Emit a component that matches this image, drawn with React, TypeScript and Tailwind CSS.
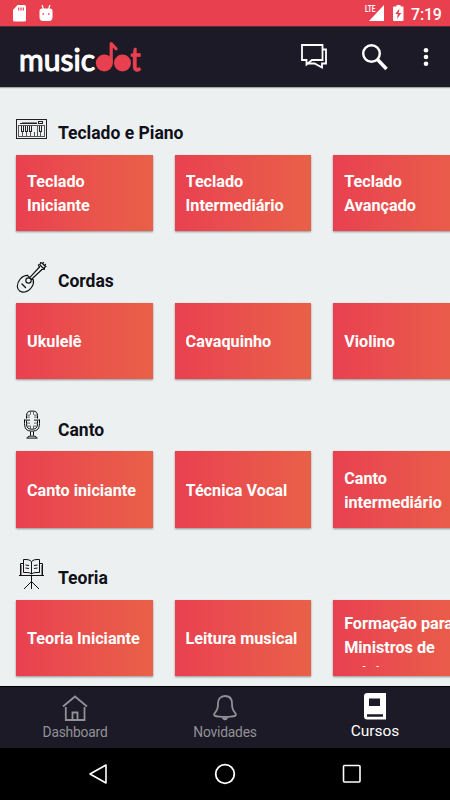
import React from "react";

type Section = { title: string; icon: React.ReactNode; courses: string[] };

function KeyboardIcon() {
  return (
    <svg width="32" height="32" viewBox="0 0 32 32" fill="none" stroke="#222" strokeWidth="1" shapeRendering="crispEdges">
      <rect x="0.5" y="6.5" width="30" height="19" />
      <rect x="2.5" y="12.5" width="26" height="11" stroke="#555" />
      <path d="M4 10.5H21" />
      <path d="M6 9.5H21" stroke="#888" />
      <path d="M22.5 8.5H26.5V10.5H22.5Z" />
      <path d="M6.500 19V23M10.500 19V23M14.500 19V23M18.500 19V23M21.500 13V23M24.500 19V23" stroke="#555" />
      <path d="M5.5 13V18.500H7.5V13M9.5 13V18.500H11.5V13M13.5 13V18.500H15.5V13M23.5 13V18.500H25.5V13" />
    </svg>
  );
}

function LuteIcon() {
  return (
    <svg width="32" height="32" viewBox="0 0 32 32" fill="none" stroke="#111" strokeWidth="1.150" strokeLinecap="round" strokeLinejoin="round">
      <path d="M11.500 14.300C6 14.300 1.300 20 1.300 25.500C1.500 29.500 5 31.500 8.800 31C14 30 18.500 24 17.300 18.800" />
      <circle cx="12.500" cy="19.500" r="2.700" />
      <path d="M11.500 14.300L13.500 16.500M15.500 18.500L17.300 18.800" />
      <path d="M13.500 16.800L23.500 6M15.300 18.500L26 8.500" />
      <path d="M23.500 6L22.300 4L24 3.500L24.700 1.500L26.500 2.500L27.500 1.500M26 8.500L28.500 8.200L28.300 6.500L30 5.500L28.500 4.500L29.500 3.300M24.500 4.500L27.500 7.500M26.500 2.500L29 5" />
      <path d="M6 23L9.500 26.500" strokeWidth="1.400" />
    </svg>
  );
}

function MicIcon() {
  return (
    <svg width="32" height="32" viewBox="0 -0.600 32 32" fill="none" stroke="#111" strokeWidth="1">
      <path d="M10.500 9V6Q10.500 1.500 15 1.500H17Q21.500 1.500 21.500 6V9" />
      <path d="M10.500 11V14Q10.500 19.500 15 19.500H17Q21.500 19.500 21.500 14V11" />
      <path d="M8 10.500H14M18 10.500H24" />
      <path d="M11 5.500H14M18 5.500H21M11 7.500H14M18 7.500H21M11 13.500H14M18 13.500H21M11 16.500H14M18 16.500H21M14.500 2V5M17.500 2V5M14.500 16V19M17.500 16V19" stroke="#666" />
      <path d="M8.500 10V14Q8.500 21.500 15 21.500H17Q23.500 21.500 23.500 14V10" />
      <path d="M14.500 22V26M17.500 22V26M11.500 28.500Q11.500 26.500 14 26.500H18Q20.500 26.500 20.500 28.500M10.500 28.500H21.500" />
    </svg>
  );
}

function StandIcon() {
  return (
    <svg width="32" height="32" viewBox="0 0 32 32" fill="none" stroke="#111" strokeWidth="1">
      <path d="M15.500 3.500Q13 1.200 10 1.500H7.500V14.500H11Q14 14.500 15.500 16Q17 14.500 20 14.500H23.500V1.500H21Q18 1.200 15.500 3.500Z" />
      <path d="M15.500 4V16M7 5.500H4.500V17.500M24 5.500H26.500V17.500" />
      <path d="M5.500 7V17M25.500 7V17" stroke="#888" />
      <path d="M3 17.500H28M9.500 7L13 7.500M9.500 10L13 10.500M18 7.500L21.500 7M18 10.500L21.500 10" />
      <path d="M15.500 17.500V31M15.500 23.500L8 31M15.500 23.500L23 31" />
    </svg>
  );
}

const sections: Section[] = [
  { title: "Teclado e Piano", icon: <KeyboardIcon />, courses: ["Teclado Iniciante", "Teclado Intermediário", "Teclado Avançado"] },
  { title: "Cordas", icon: <LuteIcon />, courses: ["Ukulelê", "Cavaquinho", "Violino"] },
  { title: "Canto", icon: <MicIcon />, courses: ["Canto iniciante", "Técnica Vocal", "Canto intermediário"] },
  { title: "Teoria", icon: <StandIcon />, courses: ["Teoria Iniciante", "Leitura musical", "Formação para Ministros de música"] },
];

function StatusBar() {
  return (
    <div className="flex h-[26px] shrink-0 items-center bg-[#e94050] pr-[8px] pl-[13px] text-white">
      <svg width="13" height="17" viewBox="0 0 13 17">
        <path d="M4.500 0H11.500Q13 0 13 1.500V15Q13 16.500 11.500 16.500H1.500Q0 16.500 0 15V5Z" fill="#fff" />
        <path d="M5.700 2.500V5.500M8 2.500V5.500M10.300 2.500V5.500" stroke="#e94050" strokeWidth="1.200" />
      </svg>
      <svg width="14" height="17" viewBox="0 0 14 17" className="ml-[13px]">
        <path d="M3 0L4.500 4M11 0L9.500 4" stroke="#fff" strokeWidth="1.200" />
        <path d="M2.500 3.500H11.500Q13.500 3.500 13.500 6V12Q13.500 16 10 16H4Q.5 16 .5 12V6Q.5 3.500 2.500 3.500Z" fill="#fff" />
        <path d="M3.500 9H5M9 9H10.500" stroke="#e94050" strokeWidth="1.300" />
      </svg>
      <div className="flex-1" />
      <svg width="20" height="18" viewBox="0 0 20 18" className="overflow-visible">
        <path d="M19 1V17H4Z" fill="#fff" />
        <text x="0" y="8" textLength="10.500" lengthAdjust="spacingAndGlyphs" fontSize="9.500" fontWeight="700" fontFamily="Roboto, sans-serif" fill="#fff" stroke="#e94050" strokeWidth="0.800" paintOrder="stroke">LTE</text>
      </svg>
      <svg width="11" height="18" viewBox="0 0 11 18" className="ml-[8px]">
        <path d="M3.500 1H7.500V2.500H10Q10.500 2.500 10.500 3.500V16Q10.500 17 9.500 17H1Q0 17 0 16V3.500Q0 2.500 1 2.500H3.500Z" fill="#fff" />
        <path d="M6.500 4.500L2.300 10H4.800L4 15L8.300 9H5.700Z" fill="#e94050" />
      </svg>
      <span className="ml-[7px] w-[31px] pt-[3px] text-[16px] leading-[23px] font-medium tracking-[-0.2px] whitespace-nowrap">7:19</span>
    </div>
  );
}

function AppBar() {
  return (
    <header className="relative z-10 flex h-[61px] shrink-0 items-center border-t border-[#5a2834] bg-[#1b1a26] pl-[18px] shadow-[0_1px_1px_rgba(0,0,0,0.3)]">
      <svg width="126" height="46" viewBox="18 35 126 46" className="mt-[1px] overflow-visible">
        <text x="19" y="70.500" textLength="76" lengthAdjust="spacingAndGlyphs" fontFamily="Lato, sans-serif" fontSize="30.500" fontWeight="400" fill="#fff" stroke="#fff" strokeWidth="1.100" strokeLinejoin="round" strokeLinecap="round">music</text>
        <g fill="#e94050" stroke="#e94050">
          <circle cx="104.300" cy="63" r="8.500" stroke="none" />
          <circle cx="122.500" cy="63" r="8.500" stroke="none" />
          <path d="M111.200 63V43.500L116 48.800" fill="none" strokeWidth="3.200" strokeLinecap="round" strokeLinejoin="round" />
        </g>
        <text x="130.500" y="70.500" textLength="10" lengthAdjust="spacingAndGlyphs" fontFamily="Lato, sans-serif" fontSize="33" fontWeight="400" fill="#e94050" stroke="#e94050" strokeWidth="1.300" strokeLinejoin="round">t</text>
      </svg>
      <div className="flex-1" />
      <svg width="28" height="28" viewBox="0 0 28 28" fill="none" stroke="#fff" strokeWidth="1.800">
        <path d="M2 2H22.500V17H12L6.500 21.500V17H2Z" />
        <path d="M22.500 6.500H26V20.500H22V24.500L14.500 20.500H8" />
      </svg>
      <svg width="28" height="28" viewBox="0 0 28 28" fill="none" stroke="#fff" className="ml-[33px]">
        <circle cx="10.500" cy="10.500" r="8.300" strokeWidth="2.400" />
        <path d="M16.500 16.500L25.500 26" strokeWidth="3.500" />
      </svg>
      <svg width="6" height="20" viewBox="0 0 6 20" fill="#fff" className="mr-[21px] ml-[34px]">
        <circle cx="3" cy="3.200" r="2.300" />
        <circle cx="3" cy="10" r="2.300" />
        <circle cx="3" cy="16.800" r="2.300" />
      </svg>
    </header>
  );
}

function CourseCard({ name }: { name: string }) {
  return (
    <div className="flex h-[76.200px] w-[136.700px] shrink-0 items-center bg-linear-to-r from-[#e94050] to-[#e96048] pl-[11px] shadow-[0_1px_2px_rgba(0,0,0,0.4)]">
      <div className="flex max-h-[58px] w-[118px] flex-col overflow-hidden">
        <p className="w-[117px] pt-[3px] text-[16.200px] leading-[24.500px] font-bold text-white">{name}</p>
      </div>
    </div>
  );
}

function Tab({ label, active, children }: { label: string; active?: boolean; children: React.ReactNode }) {
  return (
    <div className={active ? "flex flex-1 flex-col items-center pt-[5px] text-[15.500px] text-white" : "flex flex-1 flex-col items-center pt-[7px] text-[13.800px] tracking-[-0.200px] text-[#929197]"}>
      {children}
      <span className={active ? "leading-[22px]" : "leading-[21px]"}>{label}</span>
    </div>
  );
}

export default function App() {
  return (
    <div className="flex h-[800px] w-[450px] flex-col overflow-hidden bg-[#ecf0f1] font-[Roboto,sans-serif]">
      <StatusBar />
      <AppBar />
      <main className="flex h-[599px] shrink-0 flex-col overflow-hidden pt-[25.600px] pl-[16px]">
        {sections.map((s) => (
          <section key={s.title} className="flex h-[148.330px] shrink-0 flex-col">
            <div className="flex h-[42.200px] shrink-0 items-start">
              <div className="w-[42px]">{s.icon}</div>
              <h2 className="pt-[8.300px] text-[17.500px] leading-[24px] font-bold text-[#10101a]">{s.title}</h2>
            </div>
            <div className="flex gap-[21.900px]">
              {s.courses.map((c) => (
                <CourseCard key={c} name={c} />
              ))}
            </div>
          </section>
        ))}
      </main>
      <nav className="relative flex h-[62px] shrink-0 border-t border-black bg-[#1b1a26]">
        <Tab label="Dashboard">
          <svg width="28" height="28" viewBox="0 0 28 28" fill="none" stroke="currentColor" strokeWidth="1.800">
            <path d="M2 12.500L14 2.500L26 12.500M4.800 13V26H23.500V13M11.500 26V18.500H16.500V26" />
          </svg>
        </Tab>
        <Tab label="Novidades">
          <svg width="28" height="28" viewBox="0 0 28 28" fill="none" stroke="currentColor" strokeWidth="1.800">
            <path d="M14 2C9 2 7 5.500 7 9.500C7 15 6 16 3.500 19.500C2 22 5 22.300 8 22.600C12 23 16 23 20 22.600C23 22.300 26 22 24.500 19.500C22 16 21 15 21 9.500C21 5.500 19 2 14 2Z" />
            <path d="M10.500 23.500Q14 29 17.500 23.500Z" fill="currentColor" stroke="none" />
          </svg>
        </Tab>
        <Tab label="Cursos" active>
          <svg width="24" height="28" viewBox="0 0 24 28">
            <path d="M4.500 1H23V27.500H4Q1 27.500 1 24.500V4Q1 1 4.500 1Z" fill="#fff" />
            <path d="M6 6.500H17V14H6Z" fill="#1b1a26" />
            <path d="M4 23.500H20" stroke="#1b1a26" strokeWidth="2.500" />
          </svg>
        </Tab>
      </nav>
      <div className="flex h-[52px] shrink-0 items-center bg-black pl-[87px]">
        <svg width="22" height="22" viewBox="0 0 22 22" fill="none" stroke="#fff" strokeWidth="1.600" strokeLinejoin="round">
          <path d="M3 11L19 2V20Z" />
        </svg>
        <svg width="22" height="22" viewBox="0 0 22 22" fill="none" stroke="#fff" strokeWidth="1.800" className="ml-[105px]">
          <circle cx="11" cy="11" r="9.300" />
        </svg>
        <svg width="22" height="22" viewBox="0 0 22 22" fill="none" stroke="#fff" strokeWidth="1.600" className="ml-[105px]">
          <rect x="2.500" y="2.500" width="16.500" height="16.500" rx="1" />
        </svg>
      </div>
    </div>
  );
}
